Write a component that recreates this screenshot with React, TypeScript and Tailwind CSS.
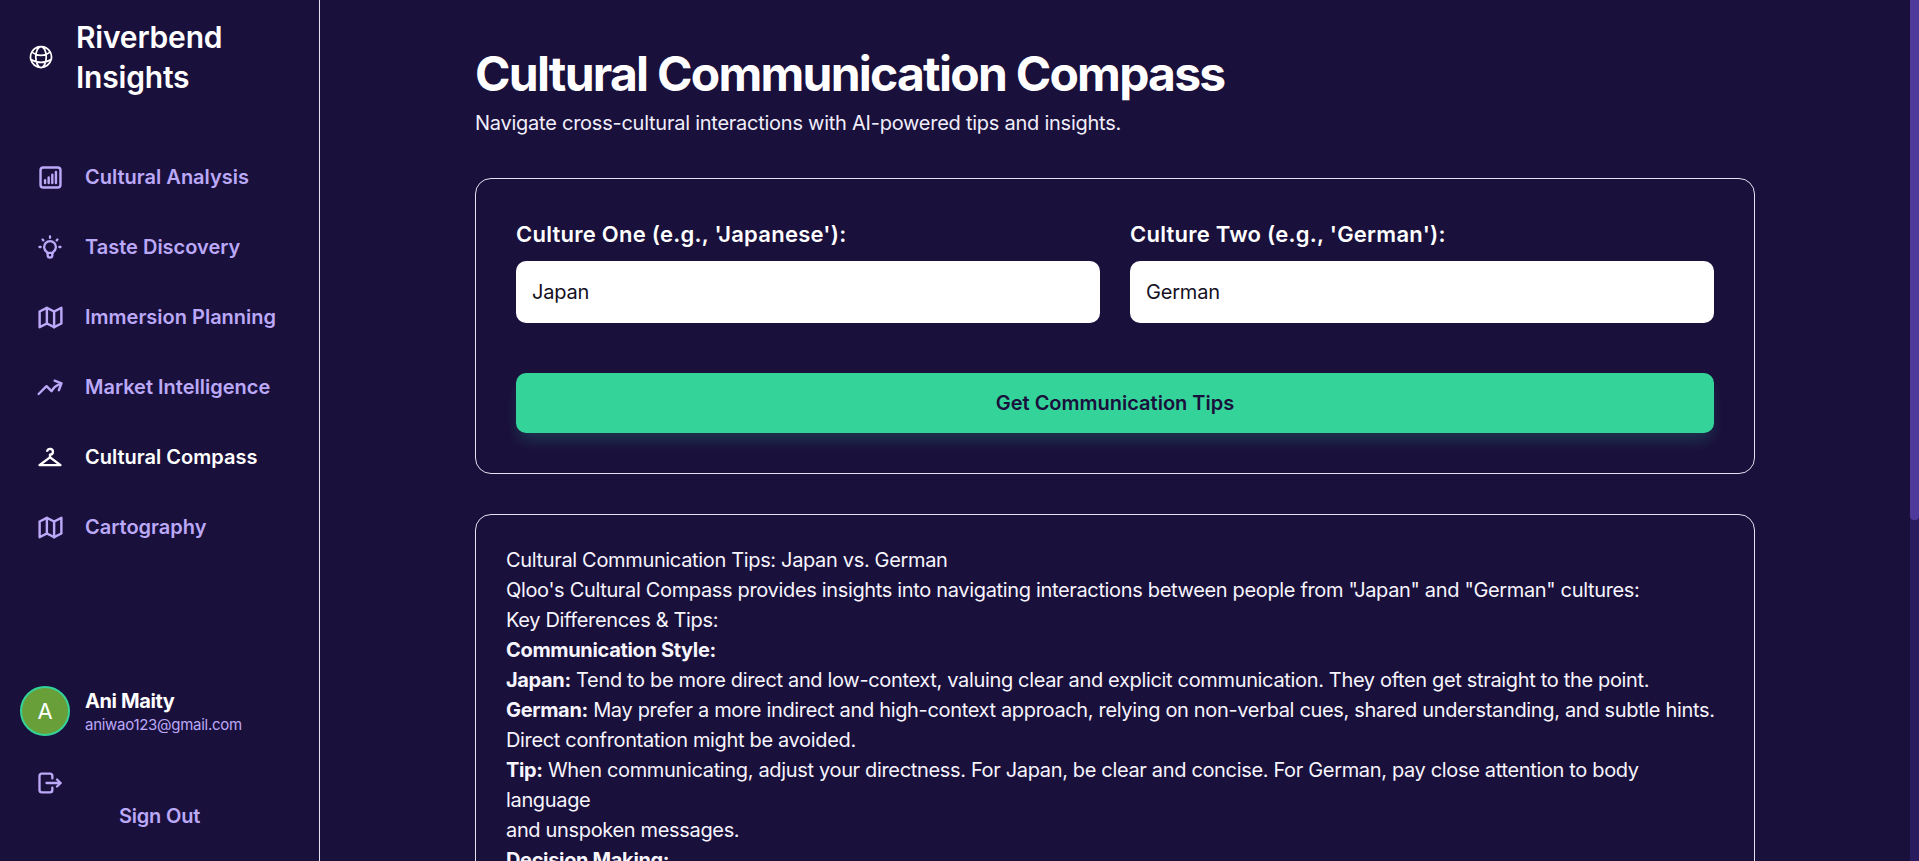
import type { ReactNode } from "react";
import { TbBulb, TbLogout, TbMap } from "react-icons/tb";
import { MdOutlineCheckroom } from "react-icons/md";
import { HiOutlineChartBarSquare, HiOutlineArrowTrendingUp, HiOutlineGlobeAlt } from "react-icons/hi2";

const nav = [
  { label: "Cultural Analysis", icon: <HiOutlineChartBarSquare size={29} strokeWidth={2} /> },
  { label: "Taste Discovery", icon: <TbBulb size={28} /> },
  { label: "Immersion Planning", icon: <TbMap size={29} /> },
  { label: "Market Intelligence", icon: <HiOutlineArrowTrendingUp size={28} strokeWidth={2} /> },
  { label: "Cultural Compass", icon: <MdOutlineCheckroom size={28} />, active: true },
  { label: "Cartography", icon: <TbMap size={29} /> },
];

function Line({ children, bold }: { children: ReactNode; bold?: boolean }) {
  return <p className={bold ? "font-bold" : ""}>{children}</p>;
}

function Field({ label, value }: { label: string; value: string }) {
  return (
    <label className="block flex-1">
      <span className="mb-[12px] block text-[22px] leading-[30px] font-semibold tracking-[0.25px] text-white">{label}</span>
      <input
        readOnly
        value={value}
        className="h-[62px] w-full rounded-[10px] bg-white px-4 text-[20px] tracking-[-0.2px] text-[#14101f] outline-none"
      />
    </label>
  );
}

export default function App() {
  return (
    <div className="flex h-screen bg-[#1a103c] font-['Inter','Liberation_Sans',sans-serif] text-white">
      <aside className="flex w-[320px] shrink-0 flex-col border-r border-[#e5e1f0]">
        <div className="flex items-center gap-[21px] pt-[17px] pl-[27px]">
          <HiOutlineGlobeAlt size={28} className="shrink-0" />
          <h1 className="text-[30px] leading-[40px] font-semibold tracking-[-0.2px]">
            Riverbend
            <br />
            Insights
          </h1>
        </div>
        <nav className="mt-[60px] flex flex-col gap-[30px] pl-[36px]">
          {nav.map((item) => (
            <a key={item.label} className={`flex h-[40px] items-center gap-[20px] ${item.active ? "text-white" : "text-[#bba9f8]"}`}>
              <span className="w-[29px] shrink-0">{item.icon}</span>
              <span className="text-[20px] font-semibold">{item.label}</span>
            </a>
          ))}
        </nav>
        <div className="mt-auto pb-[31px]">
          <div className="flex items-center gap-[15px] pl-[20px]">
            <div className="flex h-[50px] w-[50px] items-center justify-center rounded-full border-2 border-[#34d399] bg-[#689f38] text-[22px]">
              A
            </div>
            <div>
              <p className="text-[20px] leading-[26px] font-bold tracking-[-0.4px]">Ani Maity</p>
              <p className="text-[15px] leading-[21px] tracking-[-0.28px] text-[#bba9f8]">aniwao123@gmail.com</p>
            </div>
          </div>
          <button className="mt-[33px] flex w-full flex-col text-[#bba9f8]">
            <TbLogout size={28} className="ml-[36px]" />
            <span className="mt-[5px] block text-center text-[20px] leading-[28px] font-semibold tracking-[-0.2px]">Sign Out</span>
          </button>
        </div>
      </aside>
      <main className="flex-1 overflow-y-auto">
        <div className="mx-auto w-[1280px] pt-[44px] pb-[40px]">
          <h2 className="text-[48px] leading-[60px] font-bold tracking-[-1.75px]">Cultural Communication Compass</h2>
          <p className="mt-[5px] text-[20px] leading-[28px] tracking-[-0.25px] text-[#f1eefb]">Navigate cross-cultural interactions with AI-powered tips and insights.</p>
          <section className="mt-[41px] rounded-[16px] border border-[#e5e1f0] p-[40px]">
            <div className="flex gap-[30px]">
              <Field label="Culture One (e.g., 'Japanese'):" value="Japan" />
              <Field label="Culture Two (e.g., 'German'):" value="German" />
            </div>
            <button className="mt-[50px] h-[60px] w-full rounded-[10px] bg-[#34d399] text-[20px] font-semibold text-[#1a103c] shadow-[0_10px_15px_-3px_rgba(52,211,153,0.2)]">
              Get Communication Tips
            </button>
          </section>
          <section className="mt-[40px] rounded-[16px] border border-[#e5e1f0] p-[30px] text-[20px] leading-[30px] tracking-[-0.34px] text-[#f7f5fd]">
            <Line>Cultural Communication Tips: Japan vs. German</Line>
            <Line>Qloo's Cultural Compass provides insights into navigating interactions between people from "Japan" and "German" cultures:</Line>
            <Line>Key Differences &amp; Tips:</Line>
            <Line bold>Communication Style:</Line>
            <Line><b>Japan:</b> Tend to be more direct and low-context, valuing clear and explicit communication. They often get straight to the point.</Line>
            <Line><b>German:</b> May prefer a more indirect and high-context approach, relying on non-verbal cues, shared understanding, and subtle hints.</Line>
            <Line>Direct confrontation might be avoided.</Line>
            <Line><b>Tip:</b> When communicating, adjust your directness. For Japan, be clear and concise. For German, pay close attention to body language</Line>
            <Line>and unspoken messages.</Line>
            <Line bold>Decision Making:</Line>
            <Line><b>Japan:</b> Decisions might be more individualistic and driven by logical analysis, often with a clear hierarchy.</Line>
            <Line><b>German:</b> Decisions might take longer and involve group consensus and harmony.</Line>
            <Line><b>Tip:</b> Allow time for discussion and be patient while a shared decision forms.</Line>
            <Line bold>Relationship Building:</Line>
            <Line><b>Japan:</b> Relationships can be built around shared tasks and goals.</Line>
            <Line><b>German:</b> Trust is built slowly through repeated contact and mutual respect.</Line>
            <Line><b>Tip:</b> Invest time in building rapport before moving on to business matters.</Line>
            <Line>Use these tips as a starting point and stay open to individual differences.</Line>
          </section>
        </div>
      </main>
      <div className="w-[9px] shrink-0 bg-[#2a1a5e]">
        <div className="h-[520px] rounded-b-[4px] bg-[#4f3a9b]" />
      </div>
    </div>
  );
}
